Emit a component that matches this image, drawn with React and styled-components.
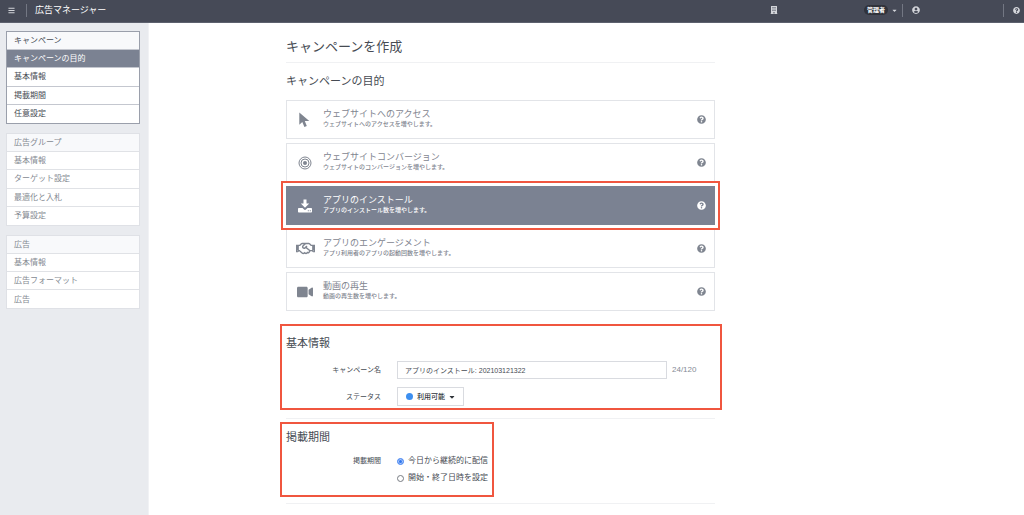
import React, { useState } from 'react';
import styled, { createGlobalStyle, css } from 'styled-components';
import {
  FaBars,
  FaBuilding,
  FaCaretDown,
  FaQuestionCircle,
  FaRegHandshake,
  FaUserCircle,
  FaVideo,
} from 'react-icons/fa';

const GlobalStyle = createGlobalStyle`
  * {
    box-sizing: border-box;
  }

  body {
    margin: 0;
    background-color: #fff;
    color: #464b53;
    font-family: 'Liberation Sans', 'Noto Sans CJK JP', sans-serif;
    font-size: 8px;
    line-height: 12px;
  }

  button,
  input {
    font: inherit;
    color: inherit;
  }
`;

const Page = styled.div`
  display: flex;
  flex-direction: column;
  min-height: 100vh;
`;

const TopBar = styled.header`
  display: flex;
  align-items: center;
  height: 23px;
  padding: 0 4px 2px 8px;
  background-color: #464a57;
  border-bottom: 1px solid #5d616e;
  color: #d3d5da;
`;

const IconButton = styled.button`
  display: flex;
  padding: 0;
  border: none;
  background: none;
  cursor: pointer;
`;

const Divider = styled.span`
  width: 1px;
  height: 13px;
  background-color: #737783;
`;

const Brand = styled.span`
  margin-right: auto;
  padding-left: 8px;
  color: #fff;
  font-size: 9px;
`;

const BarItem = styled.div`
  display: flex;
  flex: 0 0 ${props => props.$width}px;
  align-items: center;
  padding-left: ${props => (props.$spaced ? 9 : 0)}px;
`;

const RoleButton = styled(IconButton)`
  align-items: center;
  gap: 3px;
`;

const Role = styled.span`
  padding: 0 3px;
  border-radius: 5px;
  background-color: #30333b;
  color: #fff;
  font-size: 6px;
  font-weight: bold;
  line-height: 10px;
`;

const Body = styled.div`
  display: flex;
  flex: 1;
`;

const Sidebar = styled.nav`
  display: flex;
  flex-direction: column;
  flex: 0 0 149px;
  gap: 9px;
  padding: 8px 8px 8px 6px;
  background-color: #e9ebef;
  border-right: 1px solid #f1f2f5;
`;

const Group = styled.ul`
  display: grid;
  grid-auto-rows: 1fr;
  min-height: ${props => (props.$short ? 74 : 93)}px;
  margin: 0;
  padding: 0;
  list-style: none;
  background-color: #fff;
  border: 1px solid ${props => (props.$open ? '#9a9fab' : '#dfe1e6')};
  color: ${props => (props.$open ? '#464b53' : '#858a92')};
`;

const GroupItem = styled.li`
  display: flex;
  border-bottom: 1px solid ${props => (props.$open ? '#c4c7cf' : '#e0e2e6')};

  &:first-child {
    background-color: #f8f9fb;
  }

  &:last-child {
    border-bottom: none;
  }
`;

const GroupLink = styled.a`
  display: flex;
  flex: 1;
  align-items: center;
  padding: 1px 0 0 7px;
  color: inherit;
  text-decoration: none;

  ${props =>
    props.$current &&
    css`
      background-color: #7b8292;
      color: #fff;
    `}
`;

const Main = styled.main`
  flex: 1;
  padding: 14px 138px 0 137px;
`;

const Content = styled.form`
  max-width: 429px;
`;

const PageTitle = styled.h1`
  margin: 0 0 11px;
  padding-bottom: 6px;
  border-bottom: 1px solid #f0f1f3;
  font-size: 13px;
  font-weight: normal;
  line-height: 19px;
`;

const SectionTitle = styled.h2`
  margin: 0;
  font-size: 11px;
  font-weight: normal;
  line-height: 14px;
`;

const Objectives = styled.div`
  display: flex;
  flex-direction: column;
  gap: 4px;
  margin: 12px 0 18px;
`;

const highlight = css`
  position: relative;

  &::after {
    content: '';
    position: absolute;
    inset: ${props => props.$frame};
    border: 2px solid #f0563f;
    pointer-events: none;
  }
`;

const Objective = styled.div`
  display: flex;
  align-items: center;
  height: 39px;
  padding-right: 8px;
  border: 1px solid ${props => (props.$selected ? '#7b8292' : '#e2e4e8')};
  background-color: ${props => (props.$selected ? '#7b8292' : '#fff')};
  color: ${props => (props.$selected ? '#fff' : '#7f8590')};
  ${props => props.$frame && highlight}
`;

const ObjectiveButton = styled.button`
  display: flex;
  flex: 1;
  align-items: center;
  padding: 0;
  border: none;
  background: none;
  text-align: left;
  cursor: pointer;
`;

const ObjectiveIcon = styled.span`
  display: flex;
  justify-content: center;
  width: 36px;
`;

const ObjectiveText = styled.span`
  display: flex;
  flex-direction: column;
  padding-bottom: 2px;
`;

const ObjectiveName = styled.span`
  font-size: 9px;
  line-height: 12px;
`;

const ObjectiveNote = styled.span`
  font-size: 6px;
  font-weight: 500;
  line-height: 9px;
`;

const Section = styled.section`
  padding: ${props => props.$space};
  border-bottom: 1px solid #f0f1f3;
`;

const Fields = styled.div`
  width: ${props => (props.$narrow ? '208px' : 'auto')};
  padding-top: 7px;
  ${highlight}
`;

const Field = styled.div`
  display: flex;
  align-items: ${props => (props.$top ? 'flex-start' : 'center')};
  margin-top: ${props => props.$gap}px;
`;

const Label = styled.label`
  flex: 0 0 95px;
  margin-right: 16px;
  font-size: 7px;
  text-align: right;
`;

const NameInput = styled.input`
  width: 270px;
  height: 18px;
  padding: 0 7px;
  border: 1px solid #d9dbe0;
  border-radius: 0;
  font-size: 7px;
`;

const Count = styled.span`
  margin-left: 5px;
  color: #858b95;
`;

const StatusButton = styled.button`
  display: flex;
  align-items: center;
  gap: 3px;
  height: 19px;
  padding: 0 7px 0 8px;
  border: 1px solid #d9dbe0;
  background-color: #fff;
  color: #2f3339;
  font-size: 7px;
  font-weight: 500;
  cursor: pointer;
`;

const Dot = styled.span`
  width: 7px;
  height: 7px;
  margin-right: 1px;
  border-radius: 50%;
  background-color: #3d8ff0;
`;

const RadioGroup = styled.div`
  display: flex;
  flex-direction: column;
  gap: 5px;
`;

const RadioLabel = styled.label`
  display: flex;
  align-items: center;
  gap: 4px;
  white-space: nowrap;
`;

const Radio = styled.input`
  appearance: none;
  width: 7px;
  height: 7px;
  margin: 0;
  border: 1px solid #777b82;
  border-radius: 50%;

  &:checked {
    border-color: #5b93f3;
    background-color: #2f76ee;
    box-shadow: inset 0 0 0 1px #a9c7fa;
  }
`;

const PointerIcon = () => (
  <svg width='14' height='16' viewBox='0 0 14 16' fill='currentColor'>
    <path d='M1.300 .5v12.300l3-2.800 2.100 4.900 2.400-1-2-4.800h4.500z' />
  </svg>
);

const TargetIcon = () => (
  <svg width='14' height='14' viewBox='0 0 14 14' fill='none' stroke='currentColor'>
    <circle cx='7' cy='7' r='6' />
    <circle cx='7' cy='7' r='4' />
    <circle cx='7' cy='7' r='2' fill='currentColor' stroke='none' />
  </svg>
);

const DownloadIcon = () => (
  <svg width='14' height='14' viewBox='0 0 14 14' fill='currentColor'>
    <path d='M5.500 .5h3v4h2.700L7 8.700 2.800 4.500h2.700z' />
    <path
      d='M.8 9h3.700l1.300 1.300a1.700 1.700 0 0 0 2.400 0L9.500 9h3.700q.8 0 .8.8v2.900q0 .8-.8.8H.8q-.8 0-.8-.8V9.800Q0 9 .8 9zM9.800 11.300v1h1v-1zm2 0v1h1v-1z'
      fillRule='evenodd'
    />
  </svg>
);

const groups = [
  {
    open: true,
    items: ['キャンペーン', 'キャンペーンの目的', '基本情報', '掲載期間', '任意設定'],
  },
  { items: ['広告グループ', '基本情報', 'ターゲット設定', '最適化と入札', '予算設定'] },
  { items: ['広告', '基本情報', '広告フォーマット', '広告'] },
];

const objectives = [
  {
    name: 'ウェブサイトへのアクセス',
    note: 'ウェブサイトへのアクセスを増やします。',
    icon: <PointerIcon />,
  },
  {
    name: 'ウェブサイトコンバージョン',
    note: 'ウェブサイトのコンバージョンを増やします。',
    icon: <TargetIcon />,
  },
  {
    name: 'アプリのインストール',
    note: 'アプリのインストール数を増やします。',
    icon: <DownloadIcon />,
    frame: '-6px',
  },
  {
    name: 'アプリのエンゲージメント',
    note: 'アプリ利用者のアプリの起動回数を増やします。',
    icon: <FaRegHandshake size={19} />,
  },
  {
    name: '動画の再生',
    note: '動画の再生数を増やします。',
    icon: <FaVideo size={16} />,
  },
];

function App() {
  const [selected, setSelected] = useState(2);
  const [name, setName] = useState('アプリのインストール: 202103121322');

  return (
    <Page>
      <GlobalStyle />
      <TopBar>
        <BarItem $width={18}>
          <IconButton aria-label='メニュー'>
            <FaBars size={7} />
          </IconButton>
        </BarItem>
        <Divider />
        <Brand>広告マネージャー</Brand>
        <BarItem $width={94}>
          <FaBuilding size={8} />
        </BarItem>
        <BarItem $width={38}>
          <RoleButton>
            <Role>管理者</Role>
            <FaCaretDown size={7} />
          </RoleButton>
        </BarItem>
        <Divider />
        <BarItem $width={100} $spaced>
          <IconButton aria-label='アカウント'>
            <FaUserCircle size={8} />
          </IconButton>
        </BarItem>
        <Divider />
        <BarItem $width={16} $spaced>
          <IconButton aria-label='ヘルプ'>
            <FaQuestionCircle size={7} />
          </IconButton>
        </BarItem>
      </TopBar>
      <Body>
        <Sidebar>
          {groups.map((group, index) => (
            <Group key={index} $open={group.open} $short={group.items.length < 5}>
              {group.items.map((item, row) => (
                <GroupItem key={row} $open={group.open}>
                  <GroupLink href='#' $current={group.open && row === 1}>
                    {item}
                  </GroupLink>
                </GroupItem>
              ))}
            </Group>
          ))}
        </Sidebar>
        <Main>
          <Content onSubmit={evt => evt.preventDefault()}>
            <PageTitle>キャンペーンを作成</PageTitle>
            <SectionTitle>キャンペーンの目的</SectionTitle>
            <Objectives>
              {objectives.map((item, index) => (
                <Objective
                  key={item.name}
                  $selected={index === selected}
                  $frame={item.frame}
                >
                  <ObjectiveButton type='button' onClick={() => setSelected(index)}>
                    <ObjectiveIcon>{item.icon}</ObjectiveIcon>
                    <ObjectiveText>
                      <ObjectiveName>{item.name}</ObjectiveName>
                      <ObjectiveNote>{item.note}</ObjectiveNote>
                    </ObjectiveText>
                  </ObjectiveButton>
                  <IconButton type='button' aria-label='ヘルプ'>
                    <FaQuestionCircle size={9} />
                  </IconButton>
                </Objective>
              ))}
            </Objectives>
            <Section $space='0 0 12px'>
              <Fields $frame='-5px -7px -4px -6px'>
                <SectionTitle>基本情報</SectionTitle>
                <Field $gap={11}>
                  <Label htmlFor='name'>キャンペーン名</Label>
                  <NameInput
                    id='name'
                    value={name}
                    onChange={evt => setName(evt.target.value)}
                  />
                  <Count>24/120</Count>
                </Field>
                <Field $gap={8}>
                  <Label htmlFor='status'>ステータス</Label>
                  <StatusButton id='status' type='button'>
                    <Dot />
                    利用可能
                    <FaCaretDown size={8} />
                  </StatusButton>
                </Field>
              </Fields>
            </Section>
            <Section $space='4px 0 19px'>
              <Fields $narrow $frame='-1px 0 -13px -6px'>
                <SectionTitle>掲載期間</SectionTitle>
                <Field $gap={11} $top>
                  <Label as='span' id='period'>
                    掲載期間
                  </Label>
                  <RadioGroup role='radiogroup' aria-labelledby='period'>
                    <RadioLabel>
                      <Radio type='radio' name='period' defaultChecked />
                      今日から継続的に配信
                    </RadioLabel>
                    <RadioLabel>
                      <Radio type='radio' name='period' />
                      開始・終了日時を設定
                    </RadioLabel>
                  </RadioGroup>
                </Field>
              </Fields>
            </Section>
          </Content>
        </Main>
      </Body>
    </Page>
  );
}

export default App;
